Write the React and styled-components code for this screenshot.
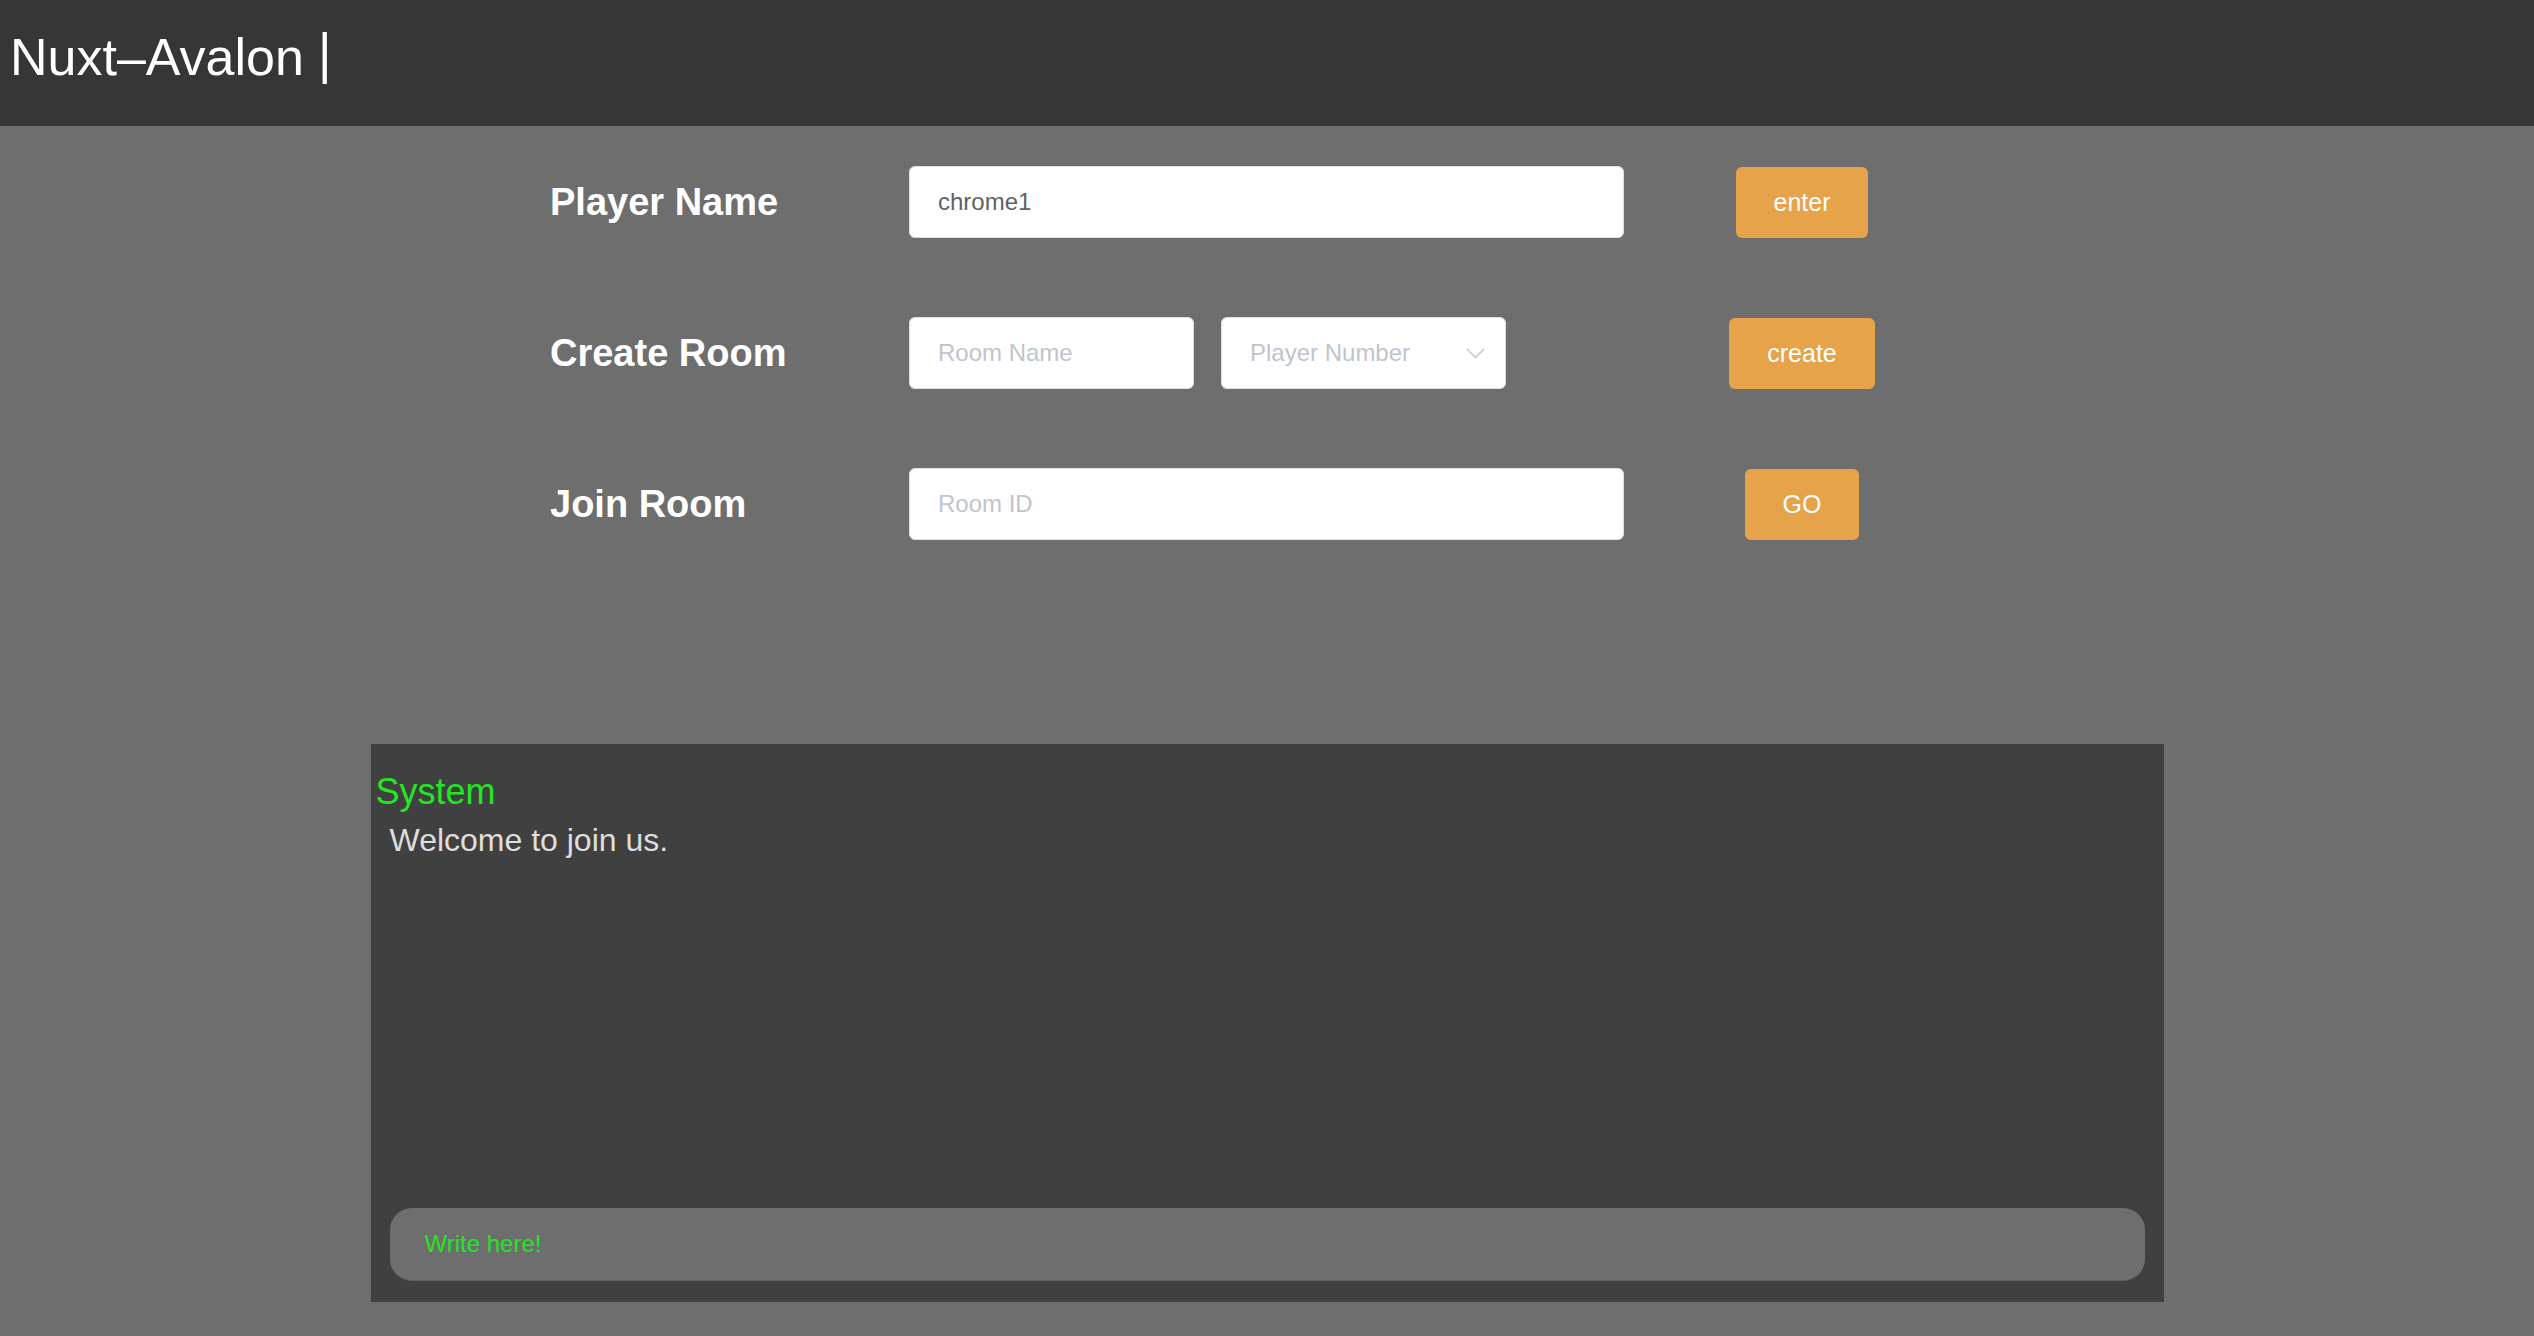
import React from 'react';
import styled, { createGlobalStyle } from 'styled-components';

const GlobalStyle = createGlobalStyle`
  html, body {
    margin: 0;
    padding: 0;
    background: #6e6e6e;
  }
  body {
    font-family: "Liberation Sans", Arial, Helvetica, sans-serif;
    min-height: 100vh;
  }
  * { box-sizing: border-box; }
`;

const Header = styled.header`
  height: 126px;
  background: #363636;
  padding: 23px 0 0 10px;
`;

const Title = styled.h1`
  margin: 0;
  font-size: 52px;
  font-weight: 400;
  line-height: 60px;
  color: #ffffff;
`;

const Cursor = styled.span`
  display: inline-block;
  margin-left: 14px;
  transform: scaleY(1.08);
  vertical-align: 4px;
`;

const Form = styled.section`
  width: 1440px;
  margin: 40px auto 0;
  display: flex;
  flex-direction: column;
  gap: 79px;
`;

const Row = styled.div`
  display: grid;
  grid-template-columns: 362px 715px 356px;
  align-items: center;
  height: 72px;
`;

const Label = styled.label`
  padding-left: 3px;
  font-size: 38px;
  font-weight: 700;
  color: #ffffff;
  line-height: 44px;
`;

const Fields = styled.div`
  display: flex;
  gap: 27px;
`;

const TextInput = styled.input`
  width: ${(p) => p.$width || '100%'};
  height: 72px;
  border: 1px solid #dcdfe6;
  border-radius: 6px;
  background: #ffffff;
  padding: 0 28px;
  font-family: inherit;
  font-size: 24px;
  color: #606266;
  outline: none;
  &::placeholder {
    color: #c0c4cc;
  }
`;

const SelectBox = styled.div`
  width: 285px;
  height: 72px;
  border: 1px solid #dcdfe6;
  border-radius: 6px;
  background: #ffffff;
  padding: 0 20px 0 28px;
  display: flex;
  align-items: center;
  justify-content: space-between;
  font-size: 24px;
  color: #c0c4cc;
  cursor: pointer;
`;

const ButtonCell = styled.div`
  display: flex;
  justify-content: center;
`;

const Button = styled.button`
  height: 71px;
  padding: 0 38px;
  border: none;
  border-radius: 6px;
  background: #e6a34a;
  color: #ffffff;
  font-family: inherit;
  font-size: 25px;
  cursor: pointer;
`;

const ChatPanel = styled.section`
  width: 1793px;
  height: 558px;
  margin: 204px auto 0;
  background: #404040;
  display: flex;
  flex-direction: column;
  padding: 28px 19px 21px 5px;
`;

const Messages = styled.div`
  flex: 1;
`;

const Sender = styled.div`
  font-size: 36px;
  line-height: 40px;
  color: #22e622;
`;

const MessageText = styled.div`
  margin-top: 10px;
  padding-left: 14px;
  font-size: 32px;
  line-height: 36px;
  color: #dedede;
`;

const ChatInput = styled.input`
  margin-left: 14px;
  height: 73px;
  border: none;
  border-bottom: 1px solid #616161;
  border-radius: 22px;
  background: #6e6e6e;
  padding: 0 35px;
  font-family: inherit;
  font-size: 24px;
  color: #22e622;
  outline: none;
  &::placeholder {
    color: #22e622;
  }
`;

const Chevron = () => (
  <svg width="19" height="11" viewBox="0 0 19 11" fill="none">
    <path d="M1 1l8.5 8.5L18 1" stroke="#c0c4cc" strokeWidth="1.4" />
  </svg>
);

export default function App() {
  return (
    <>
      <GlobalStyle />
      <Header>
        <Title>
          Nuxt–Avalon<Cursor>|</Cursor>
        </Title>
      </Header>
      <Form>
        <Row>
          <Label>Player Name</Label>
          <TextInput defaultValue="chrome1" />
          <ButtonCell>
            <Button>enter</Button>
          </ButtonCell>
        </Row>
        <Row>
          <Label>Create Room</Label>
          <Fields>
            <TextInput $width="285px" placeholder="Room Name" />
            <SelectBox>
              <span>Player Number</span>
              <Chevron />
            </SelectBox>
          </Fields>
          <ButtonCell>
            <Button>create</Button>
          </ButtonCell>
        </Row>
        <Row>
          <Label>Join Room</Label>
          <TextInput placeholder="Room ID" />
          <ButtonCell>
            <Button>GO</Button>
          </ButtonCell>
        </Row>
      </Form>
      <ChatPanel>
        <Messages>
          <Sender>System</Sender>
          <MessageText>Welcome to join us.</MessageText>
        </Messages>
        <ChatInput placeholder="Write here!" />
      </ChatPanel>
    </>
  );
}
